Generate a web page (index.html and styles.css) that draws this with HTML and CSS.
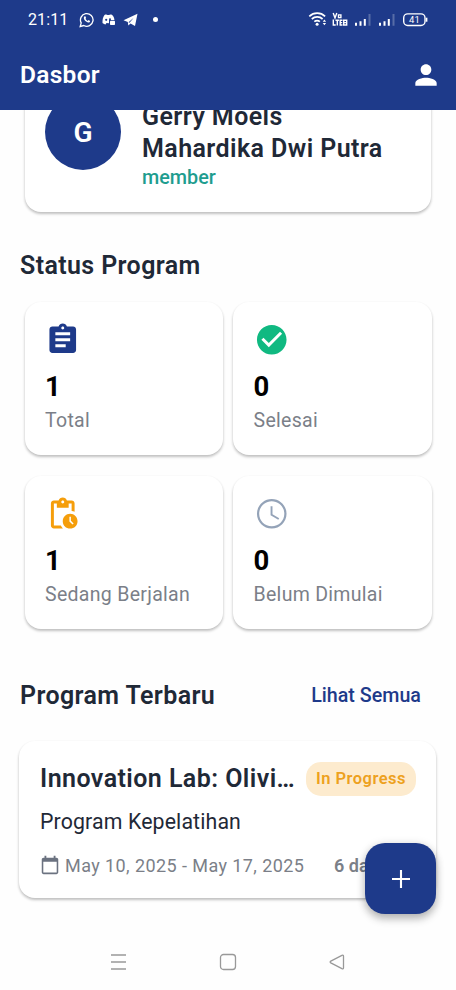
FILE: index.html
```html
<!DOCTYPE html>
<html lang="id">
<head>
<meta charset="utf-8">
<meta name="viewport" content="width=device-width, initial-scale=1">
<title>Dasbor</title>
<link rel="stylesheet" href="styles.css">
</head>
<body>
<div class="screen">
  <header class="top">
    <div class="statusbar">
      <span class="clock">21:11</span>
      <svg class="notif" width="60" height="16" viewBox="0 0 60 16">
        <path d="M1.200 14.500l1-3.600a6.300 6.300 0 1 1 2.600 2.600z" fill="none" stroke="#fff" stroke-width="1.300"/>
        <path d="M5.300 4.600c.6-.5 1.100-.4 1.300.1l.5 1.200-.6.9c.5 1 1.200 1.600 2.200 2.100l.9-.8 1.500.8c.2.900-.8 1.700-1.700 1.600C6.800 10.200 4.800 7.600 4.800 5.800z" fill="#fff"/>
        <path d="M25.500 3c1.300-.6 2.300-.6 3 .1h1.500c1-.7 2-.7 3.100-.1 1.500 1.300 2.200 3 2.300 5H30v3.300l-2.500-.2-1 1.300c-1.200-.1-2.300-.7-3-1.300-.1-3.400.4-6 2-8.100z" fill="#fff"/>
        <circle cx="27.200" cy="7.800" r="1.100" fill="#1e3a8a"/><circle cx="31" cy="7.200" r="1" fill="#1e3a8a"/>
        <rect x="31" y="8.800" width="5" height="4.200" rx=".8" fill="#fff"/>
        <path d="M44.500 8.200L58.500 1.800 56 14l-4.500-2.600-2.200 2.200-.5-3.600z" fill="#fff"/>
        <path d="M49.500 10.200l5-4.200-4 4.800z" fill="#1e3a8a"/>
      </svg>
      <span class="dot"></span>
      <svg class="radio" width="120" height="18" viewBox="0 0 120 18">
        <g fill="none" stroke="#fff" stroke-width="1.700">
          <path d="M1.300 5.300a11.500 11.500 0 0 1 15.800 0M3.800 8a8 8 0 0 1 10.800 0M6.300 10.700a4.400 4.400 0 0 1 5.600 0"/>
        </g>
        <circle cx="9.100" cy="13.200" r="1.500" fill="#fff"/>
        <path d="M14.700 10.700l1.700-2.200 1.700 2.200zM14.700 12l1.700 2.200 1.700-2.200z" fill="#fff"/>
        <g fill="none" stroke="#fff" stroke-width="1.400">
          <path d="M25.200 2l1.800 5 1.800-5M30.500 3.900h2.400v2.700h-2.400z"/>
          <path d="M25.300 8.500v5.500h2.400M27.500 9.200h3.400M29.300 9.200v5.400M34.500 9.200h-2.300v4.800h2.300M32.200 11.600h2M35.700 9.200h3v4.800h-3zM35.700 11.600h3"/>
        </g>
        <g stroke="#fff" stroke-width="2">
          <path d="M48 14.800v-3M52.500 14.800v-4.500M56.800 14.800V8M72 14.800v-3M76.500 14.800v-4.500M80.800 14.800V8"/>
          <path opacity=".25" d="M61.500 14.800V3M85.500 14.800V3"/>
        </g>
        <rect x="95.700" y="2.900" width="21.300" height="11.600" rx="4" fill="none" stroke="#fff" stroke-width="1.400"/>
        <path d="M118.600 6.700v4" stroke="#fff" stroke-width="1.600"/>
        <text class="level" x="106.400" y="12.200" text-anchor="middle">41</text>
      </svg>
    </div>
    <div class="appbar">
      <h1>Dasbor</h1>
      <svg class="person" viewBox="0 0 24 24"><path d="M12 12c2.210 0 4-1.790 4-4s-1.790-4-4-4-4 1.790-4 4 1.790 4 4 4zm0 2c-2.670 0-8 1.340-8 4v2h16v-2c0-2.660-5.330-4-8-4z"/></svg>
    </div>
  </header>

  <main class="content">
    <section class="card profile">
      <div class="avatar">G</div>
      <div class="who">
        <div class="name">Gerry Moels<br>Mahardika Dwi Putra</div>
        <div class="role">member</div>
      </div>
    </section>

    <h2 class="heading">Status Program</h2>
    <section class="stats">
      <div class="card stat">
        <svg class="icon navy" viewBox="0 0 24 24"><path d="M19 3h-4.180C14.400 1.840 13.300 1 12 1c-1.300 0-2.400.84-2.820 2H5c-1.100 0-2 .9-2 2v14c0 1.100.9 2 2 2h14c1.100 0 2-.9 2-2V5c0-1.100-.9-2-2-2zm-7 0c.55 0 1 .45 1 1s-.45 1-1 1-1-.45-1-1 .45-1 1-1zm2 14H7v-2h7v2zm3-4H7v-2h10v2zm0-4H7V7h10v2z"/></svg>
        <div class="num">1</div><div class="label">Total</div>
      </div>
      <div class="card stat">
        <svg class="icon green" viewBox="0 0 24 24"><path d="M12 2C6.480 2 2 6.480 2 12s4.480 10 10 10 10-4.480 10-10S17.520 2 12 2zm-2 15l-5-5 1.410-1.410L10 14.170l7.590-7.590L19 8l-9 9z"/></svg>
        <div class="num">0</div><div class="label">Selesai</div>
      </div>
      <div class="card stat">
        <svg class="icon amber" viewBox="0 0 24 24"><path d="M17 12c-2.760 0-5 2.240-5 5s2.240 5 5 5 5-2.240 5-5-2.240-5-5-5zm1.650 7.350L16.500 17.200V14h1v2.790l1.850 1.850-.7.71zM18 3h-3.180C14.400 1.840 13.300 1 12 1s-2.400.84-2.820 2H6c-1.100 0-2 .9-2 2v15c0 1.100.9 2 2 2h6.110c-.59-.57-1.070-1.250-1.420-2H6V5h2v3h8V5h2v5.080c.71.1 1.380.31 2 .6V5c0-1.100-.9-2-2-2zm-6 2c-.55 0-1-.45-1-1s.45-1 1-1 1 .45 1 1-.45 1-1 1z"/></svg>
        <div class="num">1</div><div class="label">Sedang Berjalan</div>
      </div>
      <div class="card stat">
        <svg class="icon slate" viewBox="0 0 24 24"><path d="M11.990 2C6.470 2 2 6.480 2 12s4.470 10 9.990 10C17.520 22 22 17.520 22 12S17.520 2 11.990 2zM12 20.500c-4.700 0-8.500-3.800-8.500-8.500s3.800-8.500 8.500-8.500 8.500 3.800 8.500 8.500-3.800 8.500-8.500 8.500zm.5-13.500H11.200v6l5.200 3.100.65-1.100-4.550-2.700z"/></svg>
        <div class="num">0</div><div class="label">Belum Dimulai</div>
      </div>
    </section>

    <div class="row">
      <h2 class="heading">Program Terbaru</h2>
      <a class="all">Lihat Semua</a>
    </div>
    <section class="card program">
      <div class="line">
        <h3>Innovation Lab: Olivi…</h3>
        <span class="badge">In Progress</span>
      </div>
      <p class="kind">Program Kepelatihan</p>
      <div class="meta">
        <svg class="cal" viewBox="0 0 24 24"><path d="M19 4h-1V2h-2v2H8V2H6v2H5c-1.110 0-2 .9-2 2v14c0 1.100.89 2 2 2h14c1.100 0 2-.9 2-2V6c0-1.100-.9-2-2-2zm.3 16.300H4.700V8.500h14.600V20.300z"/></svg>
        <span class="date">May 10, 2025 - May 17, 2025</span>
        <span class="days">6 da</span>
      </div>
    </section>
  </main>

  <div class="fab"><svg width="20" height="20" viewBox="0 0 20 20"><path d="M10 1v18M1 10h18" stroke="#fff" stroke-width="2.100"/></svg></div>

  <nav class="navbar">
    <svg width="18" height="18" viewBox="0 0 18 18"><path d="M1 2h15M1 9h15M1 16h15"/></svg>
    <svg width="18" height="18" viewBox="0 0 18 18"><rect x="1.500" y="1.500" width="15" height="15" rx="3"/></svg>
    <svg width="18" height="18" viewBox="0 0 18 18"><path d="M2.800 8.100L13.900 2.300q1.600-.6 1.600 1v11.400q0 1.600-1.600 1L2.800 9.900q-1.300-.9 0-1.800z"/></svg>
  </nav>
</div>
</body>
</html>
```
FILE: styles.css
```css
* { box-sizing: border-box; margin: 0; }
body { background: #fefefe; font-family: Roboto, "Liberation Sans", sans-serif; color: #1f2937; }
.screen { position: relative; width: 456px; height: 990px; overflow: hidden; display: flex; flex-direction: column; }
svg { display: block; flex: none; }
.top { height: 110px; flex: none; background: #1e3a8a; color: #fff; position: relative; z-index: 1; }
.statusbar { height: 39px; display: flex; align-items: center; padding: 0 28px; }
.clock { width: 51px; font-size: 16px; letter-spacing: .1px; line-height: 20px; white-space: nowrap; }
.dot { width: 5px; height: 5px; border-radius: 50%; background: #fff; margin-left: 14px; }
.radio { margin-left: auto; }
.level { font-size: 9.500px; fill: #fff; }
.appbar { height: 72px; display: flex; align-items: center; justify-content: space-between; padding: 0 14px 0 20px; }
h1 { font-size: 24.500px; font-weight: 600; line-height: 30px; letter-spacing: .3px; }
.person { width: 32px; height: 32px; fill: #fff; }

.content { padding: 0 20px; flex: 1; }
.card { background: #fff; border-radius: 16px; box-shadow: 0 2px 3px rgba(0,0,0,.22), 0 1px 3px rgba(0,0,0,.06); }
.profile { height: 152px; margin: -50px 5px 0; padding: 0 20px; display: flex; align-items: center; gap: 21px; }
.avatar { width: 76px; height: 76px; margin-top: -8px; border-radius: 50%; background: #1e3a8a; color: #fff; font-size: 28px; font-weight: 600; display: flex; align-items: center; justify-content: center; }
.who { padding-top: 19px; }
.name { font-size: 25px; font-weight: 600; line-height: 32px; letter-spacing: .42px; white-space: nowrap; }
.role { font-size: 19.800px; font-weight: 500; line-height: 26px; color: #1f9d8f; }
.heading { font-size: 25px; font-weight: 600; line-height: 32px; letter-spacing: .38px; white-space: nowrap; }
.profile + .heading { margin-top: 38px; }
.stats { display: grid; grid-template-columns: 198.500px 198.500px; gap: 21px 10px; margin: 20px 4.500px 0; }
.stat { height: 153px; padding: 20px 20.500px 0; }
.icon { width: 35.500px; height: 35.500px; }
.navy { fill: #1e3a8a; } .green { fill: #10b981; } .amber { fill: #f59e0b; } .slate { fill: #94a3b8; }
.num { font-size: 27.500px; font-weight: 700; line-height: 34px; color: #000; margin-top: 12.500px; }
.label { font-size: 19.500px; line-height: 26px; letter-spacing: .3px; color: #7b7f88; margin-top: 3.500px; white-space: nowrap; }
.row { display: flex; justify-content: space-between; align-items: center; margin-top: 51px; padding-right: 15px; }
.all { color: #1e3a8a; font-size: 19.700px; font-weight: 500; padding-bottom: 2px; }
.program { width: 417px; height: 157px; margin: 29px 0 0 -1px; padding: 22px 20px 0 21px; }
.line { display: flex; align-items: center; justify-content: space-between; height: 32px; }
h3 { font-size: 25px; font-weight: 600; line-height: 32px; letter-spacing: .44px; white-space: nowrap; }
.badge { height: 34px; width: 110px; border-radius: 15px; background: #fdebce; color: #eda11e; font-size: 16.500px; font-weight: 600; line-height: 34px; letter-spacing: .47px; text-align: center; white-space: nowrap; }
.kind { font-size: 21.300px; line-height: 28px; margin-top: 13px; letter-spacing: .13px; }
.meta { display: flex; align-items: center; height: 24px; margin-top: 17px; font-size: 18px; color: #7b7f88; white-space: nowrap; }
.cal { width: 22px; height: 22px; margin-left: -1px; fill: #6b7280; }
.date { margin-left: 4px; width: 269px; letter-spacing: .42px; }
.days { font-weight: 600; }
.fab { position: absolute; left: 365px; top: 843px; width: 71px; height: 71px; border-radius: 20px; background: #1e3a8a; box-shadow: 0 5px 8px rgba(0,0,0,.24), 0 1px 10px rgba(0,0,0,.12); display: flex; align-items: center; justify-content: center; }
.navbar { height: 56px; flex: none; display: flex; justify-content: space-between; align-items: center; padding: 0 110px; }
.navbar svg { fill: none; stroke: #999; stroke-width: 1.300; }
```
